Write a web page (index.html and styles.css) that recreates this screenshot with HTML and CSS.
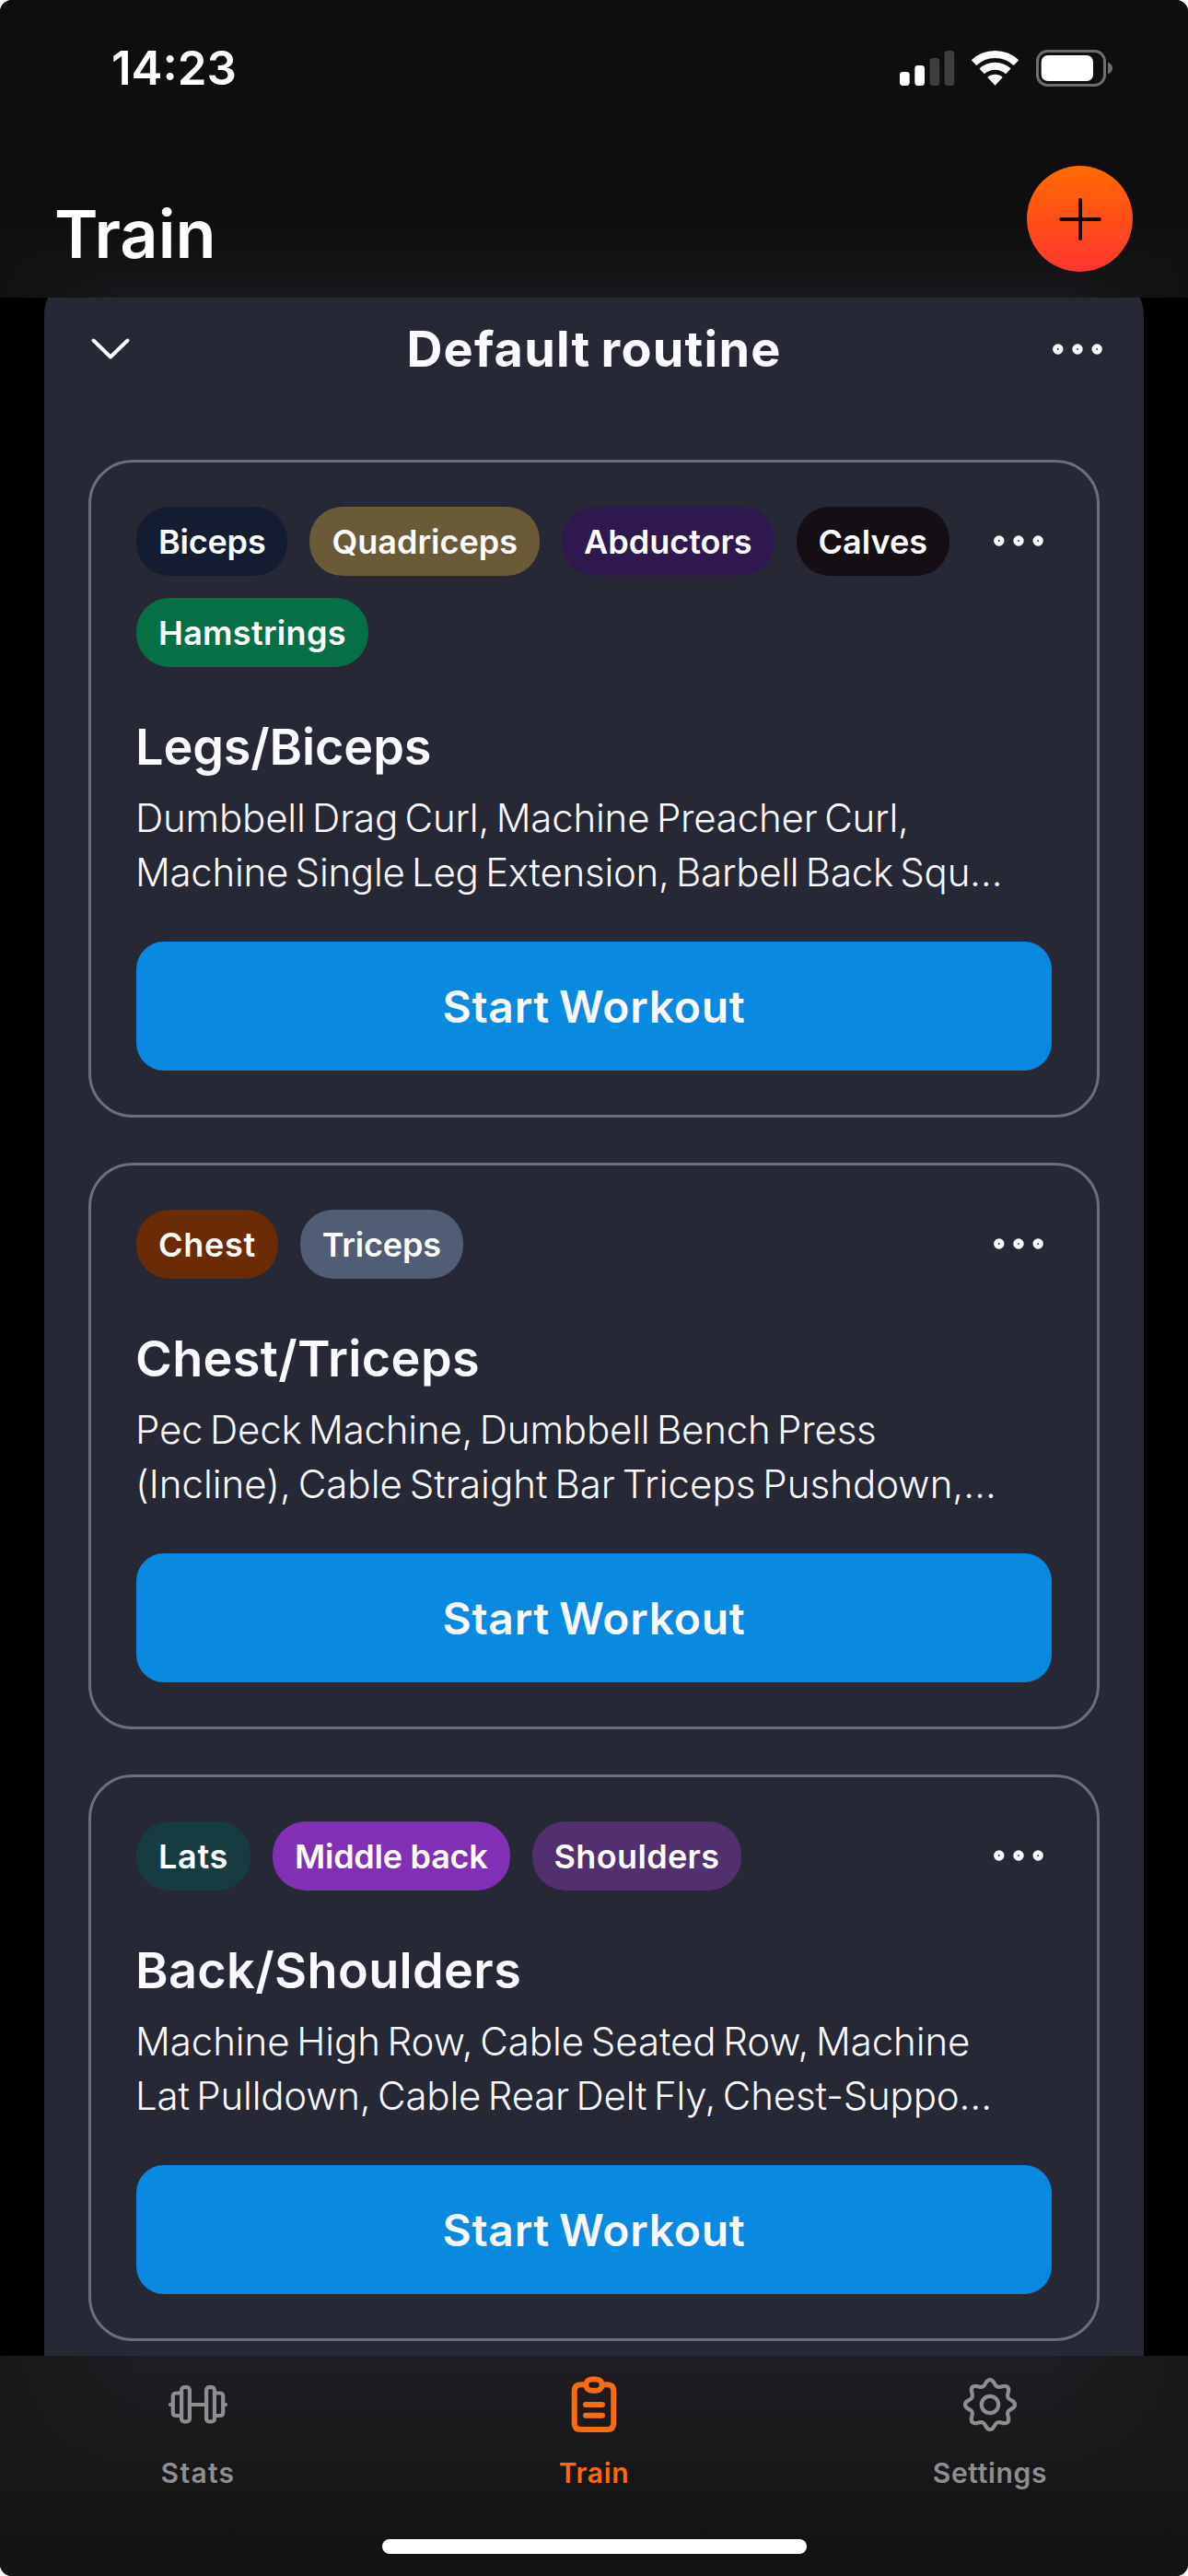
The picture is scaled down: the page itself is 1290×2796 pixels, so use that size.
FILE: index.html
```html
<!DOCTYPE html>
<html lang="en">
<head>
<meta charset="utf-8">
<title>Train</title>
<link rel="stylesheet" href="styles.css">
</head>
<body>
<svg class="defs" aria-hidden="true">
  <symbol id="dots" viewBox="0 0 72 24">
    <g fill="none" stroke="#fafaff" stroke-width="4.8">
      <circle cx="14.8" cy="12" r="3.3"/><circle cx="36" cy="12" r="3.3"/><circle cx="57.2" cy="12" r="3.3"/>
    </g>
  </symbol>
  <path id="tooth" d="M0-27C5-27 3.9-21.1 8.04-19.4C12.2-17.7 15.6-22.6 19.1-19.1"/>
</svg>
<div class="screen">
  <header class="header">
    <div class="status">
      <span class="clock">14:23</span>
      <svg class="status-icons" viewBox="0 0 231 40">
        <g fill="#fff">
          <rect x="0" y="24" width="10.7" height="15" rx="3.4"/>
          <rect x="16.3" y="17" width="10.7" height="22" rx="3.4"/>
        </g>
        <g fill="#3e3e3e">
          <rect x="32.6" y="9" width="10.7" height="30" rx="3.4"/>
          <rect x="48.6" y="1" width="10.7" height="38" rx="3.4"/>
        </g>
        <g fill="none" stroke="#fff" stroke-width="8">
          <path d="M80.5 14.1A33.7 33.7 0 0 1 126.5 14.1"/>
          <path d="M89.2 23.4A20.9 20.9 0 0 1 117.8 23.4"/>
        </g>
        <path fill="#fff" d="M103.5 38.7L95.3 29.9A12 12 0 0 1 111.7 29.9Z"/>
        <rect x="149.5" y="1.5" width="73" height="37" rx="11" fill="none" stroke="#6e6e6e" stroke-width="3"/>
        <rect x="153.7" y="6" width="56.3" height="28" rx="7" fill="#fff"/>
        <path d="M226 13.7Q231 15.5 231 20T226 26.3Z" fill="#6e6e6e"/>
      </svg>
    </div>
    <div class="nav">
      <h1 class="page-title">Train</h1>
      <button class="add" aria-label="Add">
        <svg viewBox="0 0 48 48"><path d="M24 3V45M3 24H45" fill="none" stroke="#160603" stroke-width="4" stroke-linecap="round"/></svg>
      </button>
    </div>
  </header>

  <main class="content">
    <section class="routine">
      <div class="routine-head">
        <svg class="chevron" viewBox="0 0 72 24"><path d="M17.5 2.5L36 20.5L54.5 2.5" fill="none" stroke="#fafaff" stroke-width="4" stroke-linecap="round" stroke-linejoin="round"/></svg>
        <h2 class="routine-title">Default routine</h2>
        <svg class="dots"><use href="#dots"/></svg>
      </div>

      <article class="card">
        <div class="card-top">
          <div class="chips">
            <span class="chip biceps">Biceps</span><span class="chip quadriceps">Quadriceps</span><span class="chip abductors">Abductors</span><span class="chip calves">Calves</span><span class="chip hamstrings">Hamstrings</span>
          </div>
          <svg class="dots"><use href="#dots"/></svg>
        </div>
        <h3 class="card-title">Legs/Biceps</h3>
        <p class="exercises"><span class="line">Dumbbell Drag Curl, Machine Preacher Curl,</span><span class="line tighter">Machine Single Leg Extension, Barbell Back Squ…</span></p>
        <button class="start">Start Workout</button>
      </article>

      <article class="card">
        <div class="card-top">
          <div class="chips">
            <span class="chip chest">Chest</span><span class="chip triceps">Triceps</span>
          </div>
          <svg class="dots"><use href="#dots"/></svg>
        </div>
        <h3 class="card-title wide">Chest/Triceps</h3>
        <p class="exercises"><span class="line">Pec Deck Machine, Dumbbell Bench Press</span><span class="line looser">(Incline), Cable Straight Bar Triceps Pushdown,…</span></p>
        <button class="start">Start Workout</button>
      </article>

      <article class="card">
        <div class="card-top">
          <div class="chips">
            <span class="chip lats">Lats</span><span class="chip middle-back">Middle back</span><span class="chip shoulders">Shoulders</span>
          </div>
          <svg class="dots"><use href="#dots"/></svg>
        </div>
        <h3 class="card-title wide">Back/Shoulders</h3>
        <p class="exercises"><span class="line loose">Machine High Row, Cable Seated Row, Machine</span><span class="line">Lat Pulldown, Cable Rear Delt Fly, Chest-Suppo…</span></p>
        <button class="start">Start Workout</button>
      </article>
    </section>
  </main>

  <footer class="tabbar">
    <nav class="tabs">
      <a class="tab">
        <svg viewBox="0 0 72 72" fill="none" stroke="currentColor" stroke-width="4.2" stroke-linecap="round" stroke-linejoin="round">
          <rect x="18.1" y="17.2" width="8.8" height="37.2" rx="3"/>
          <rect x="45.1" y="17.2" width="8.8" height="37.2" rx="3"/>
          <path d="M18 23.5H12.2Q8.8 23.5 8.8 27V44.6Q8.8 48 12.2 48H18M54 23.5H59.8Q63.2 23.5 63.2 27V44.6Q63.2 48 59.8 48H54M27 36H45M6 36H8M64 36H66"/>
        </svg>
        <span class="tab-label stats">Stats</span>
      </a>
      <a class="tab active">
        <svg viewBox="0 0 72 72" fill="none" stroke="currentColor" stroke-width="6" stroke-linecap="round" stroke-linejoin="round">
          <path d="M27 14.3H21.7Q14.7 14.3 14.7 21.3V56Q14.7 63 21.7 63H50.3Q57.3 63 57.3 56V21.3Q57.3 14.3 50.3 14.3H45"/>
          <rect x="27.3" y="8.4" width="17.4" height="12.4" rx="6.2"/>
          <path d="M27 36H45M27 47.8H45"/>
        </svg>
        <span class="tab-label">Train</span>
      </a>
      <a class="tab">
        <svg viewBox="0 0 72 72" fill="none" stroke="currentColor" stroke-width="4.2" stroke-linecap="round">
          <g transform="translate(36 36)">
            <use href="#tooth"/><use href="#tooth" transform="rotate(90)"/><use href="#tooth" transform="rotate(180)"/><use href="#tooth" transform="rotate(270)"/><use href="#tooth" transform="rotate(45)"/><use href="#tooth" transform="rotate(135)"/><use href="#tooth" transform="rotate(225)"/><use href="#tooth" transform="rotate(315)"/>
            <circle r="9.2"/>
          </g>
        </svg>
        <span class="tab-label">Settings</span>
      </a>
    </nav>
    <div class="home-indicator"></div>
  </footer>
</div>
</body>
</html>
```
FILE: styles.css
```css
* { box-sizing: border-box; }

body {
  margin: 0;
  background: #fff;
  font-family: Inter, "Liberation Sans", sans-serif;
  color: #fafaff;
}

h1, h2, h3, p { margin: 0; }

button {
  border: 0;
  padding: 0;
  font-family: inherit;
  color: inherit;
}

.defs { position: absolute; width: 0; height: 0; }

.screen {
  display: flex;
  flex-direction: column;
  width: 1290px;
  height: 2796px;
  border-radius: 13px;
  overflow: hidden;
  background: #000;
}

/* Header */
.header {
  flex: none;
  height: 323px;
  background:
    linear-gradient(90deg, #111 0, rgba(17, 17, 17, 0) 130px, rgba(17, 17, 17, 0) 1160px, #111 1290px) 0 100% / 100% 60px no-repeat,
    linear-gradient(#0e0e0e 0, #0e0e0e 240px, #18181c 323px);
}

.status {
  display: flex;
  justify-content: space-between;
  align-items: center;
  height: 147px;
  padding: 0 82px 0 121px;
}

.clock {
  font-size: 51px;
  font-weight: 600;
  line-height: 62px;
  color: #fff;
}

.status-icons { display: block; width: 231px; height: 40px; }

.nav {
  display: flex;
  justify-content: space-between;
  align-items: flex-start;
  padding: 33px 60px 0 59px;
}

.page-title {
  margin-top: 24px;
  font-size: 72px;
  font-weight: 600;
  line-height: 100px;
  color: #fff;
}

.add {
  display: grid;
  place-items: center;
  width: 115px;
  height: 115px;
  border-radius: 50%;
  background: linear-gradient(#ff6a00, #ff3530);
}

.add svg { width: 48px; height: 48px; }

/* Routine panel */
.content {
  flex: 1;
  min-height: 0;
  overflow: hidden;
  padding: 0 48px;
}

.routine {
  display: flex;
  flex-direction: column;
  gap: 49px;
  height: 2400px;
  margin-top: -29px;
  border-radius: 48px;
  background: #262835;
}

.routine-head {
  flex: none;
  display: flex;
  justify-content: space-between;
  align-items: center;
  height: 169px;
  margin-bottom: -13px;
  padding: 0 36px;
}

.chevron, .dots {
  flex: none;
  display: block;
  width: 72px;
  height: 24px;
}

.routine-title {
  font-size: 54px;
  font-weight: 700;
  line-height: 74px;
  letter-spacing: 1.2px;
  word-spacing: -3px;
}

/* Workout cards */
.card {
  flex: none;
  display: flex;
  flex-direction: column;
  margin: 0 48px;
  padding: 48px 49px;
  border: 3px solid #6b6f7d;
  border-radius: 48px;
}

.card-top { display: flex; }

.card-top .dots { margin-top: 25px; }

.chips {
  flex: 1;
  display: flex;
  flex-wrap: wrap;
  gap: 24px;
}

.chip {
  height: 75px;
  padding: 0 24px;
  border-radius: 36px;
  font-size: 36px;
  font-weight: 600;
  line-height: 77px;
  color: #fff;
}

.biceps { background: #131c30; letter-spacing: -0.2px; }
.quadriceps { background: #6b5a38; }
.abductors { background: #2f184d; }
.calves { background: #150e15; }
.hamstrings { background: #066f46; letter-spacing: 0.3px; }
.chest { background: #6a2b06; letter-spacing: 0.7px; }
.triceps { background: #515d74; letter-spacing: -0.2px; }
.lats { background: #163c42; letter-spacing: 0.7px; }
.middle-back { background: #812fb5; letter-spacing: -0.25px; }
.shoulders { background: #52306f; letter-spacing: 0.35px; }

.card-title {
  margin: 50px 0 0 -1px;
  font-size: 54px;
  font-weight: 600;
  line-height: 74px;
  letter-spacing: -0.15px;
}

.card-title.wide { letter-spacing: 0.35px; }

.exercises {
  margin: 11px 0 0 -1px;
  font-size: 42px;
  font-weight: 300;
  line-height: 58.5px;
  letter-spacing: -0.2px;
  word-spacing: -4px;
}

.line { display: block; white-space: nowrap; }
.tighter { letter-spacing: -0.27px; }
.loose { letter-spacing: -0.07px; }
.looser { letter-spacing: 0.03px; }

.start {
  height: 140px;
  margin-top: 46px;
  padding-top: 1px;
  border-radius: 30px;
  background: #0a89e1;
  font-size: 48px;
  font-weight: 600;
  letter-spacing: 0.75px;
  word-spacing: -3px;
}

/* Tab bar */
.tabbar {
  flex: none;
  display: flex;
  flex-direction: column;
  align-items: center;
  height: 239px;
  background:
    linear-gradient(90deg, #171717 0, rgba(23, 23, 23, 0) 150px, rgba(23, 23, 23, 0) 1140px, #171717 1290px) 0 0 / 100% 150px no-repeat,
    linear-gradient(#1e1e23 0, #18181a 120px, #141414 200px);
}

.tabs {
  display: grid;
  grid-template-columns: repeat(3, 1fr);
  width: 100%;
  padding-top: 17px;
}

.tab {
  display: flex;
  flex-direction: column;
  align-items: center;
  color: #8e8e91;
}

.tab.active { color: #ff6a0a; }

.tab svg { display: block; width: 72px; height: 72px; }

.tab-label {
  margin-top: 20px;
  font-size: 30px;
  font-weight: 600;
  line-height: 37px;
  letter-spacing: 0.7px;
}

.tab-label.stats { letter-spacing: 1.3px; }

.home-indicator {
  width: 461px;
  height: 16px;
  margin-top: 53px;
  border-radius: 8px;
  background: #fff;
}
```
